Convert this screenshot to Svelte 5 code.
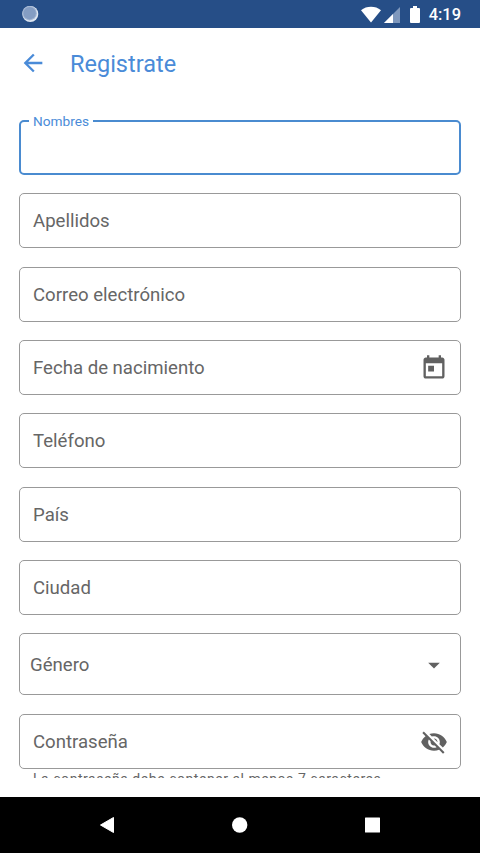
<script lang="ts">
    interface Field {
        label: string;
        icon?: "calendar" | "dropdown" | "eye-off";
        helper?: string;
    }

    const fields: Field[] = [
        { label: "Nombres" },
        { label: "Apellidos" },
        { label: "Correo electrónico" },
        { label: "Fecha de nacimiento", icon: "calendar" },
        { label: "Teléfono" },
        { label: "País" },
        { label: "Ciudad" },
        { label: "Género", icon: "dropdown" },
        {
            label: "Contraseña",
            icon: "eye-off",
            helper: "La contraseña debe contener al menos 7 caracteres",
        },
    ];

    let focused = "Nombres";
</script>

<div class="screen">
    <div class="status-bar">
        <svg class="sync" width="18" height="18" viewBox="0 0 18 18">
            <circle cx="9.300" cy="9" r="8" fill="#dfe7f2" />
            <circle cx="8.600" cy="8.200" r="7.300" fill="#a3b6d3" />
            <circle cx="8.600" cy="8.200" r="6.200" fill="#849dc3" />
        </svg>
        <svg class="wifi" width="22" height="17" viewBox="0 0 22 17">
            <path d="M11 16.5L1 4.2Q5.400 .8 11 .8T21 4.200z" fill="#fff" />
        </svg>
        <svg class="signal" width="16" height="16" viewBox="0 0 16 16">
            <path d="M0 16L16 0V16z" fill="#7f98bd" />
            <path d="M0 16L9 7V16z" fill="#fff" />
        </svg>
        <svg class="battery" width="10" height="17" viewBox="0 0 10 17">
            <path d="M3 0h4v2h2q1 0 1 1v13q0 1-1 1H1q-1 0-1-1V3q0-1 1-1h2z" fill="#fff" />
        </svg>
        <span class="time">4:19</span>
    </div>

    <div class="app-bar">
        <svg class="back" width="28" height="28" viewBox="0 0 24 24">
            <path d="M20 11H7.830l5.590-5.590L12 4l-8 8 8 8 1.410-1.410L7.830 13H20v-2z" fill="#4a8bd8" />
        </svg>
        <h1>Registrate</h1>
    </div>

    <div class="form">
        {#each fields as field}
            <div
                class="field"
                class:focused={field.label === focused}
                class:select={field.icon === "dropdown"}
            >
                <span class="label">{field.label}</span>
                {#if field.icon === "calendar"}
                    <svg width="28" height="28" viewBox="0 0 24 24">
                        <path d="M19 3h-1V1h-2v2H8V1H6v2H5c-1.110 0-1.990.9-1.990 2L3 19c0 1.100.890 2 2 2h14c1.100 0 2-.9 2-2V5c0-1.100-.9-2-2-2zm0 16H5V8h14v11zM7 10h5v5H7z" />
                    </svg>
                {:else if field.icon === "dropdown"}
                    <svg width="28" height="28" viewBox="0 0 24 24">
                        <path d="M7 10l5 5 5-5z" />
                    </svg>
                {:else if field.icon === "eye-off"}
                    <svg width="28" height="28" viewBox="0 0 24 24">
                        <path d="M12 7c2.760 0 5 2.240 5 5 0 .650-.130 1.260-.360 1.830l2.920 2.920c1.510-1.260 2.700-2.890 3.430-4.750-1.730-4.390-6-7.500-11-7.500-1.400 0-2.740.250-3.980.700l2.160 2.160C10.740 7.130 11.350 7 12 7zM2 4.270l2.280 2.280.460.460C3.080 8.300 1.780 10.020 1 12c1.730 4.390 6 7.500 11 7.500 1.550 0 3.030-.3 4.380-.840l.420.420L19.730 22 21 20.730 3.270 3 2 4.270zM7.530 9.800l1.550 1.550c-.050.210-.080.430-.080.650 0 1.660 1.340 3 3 3 .220 0 .440-.030.650-.080l1.550 1.550c-.670.330-1.410.530-2.200.530-2.760 0-5-2.240-5-5 0-.790.200-1.530.530-2.200zm4.310-.780l3.150 3.150.020-.160c0-1.660-1.340-3-3-3l-.170.010z" />
                    </svg>
                {/if}
            </div>
            {#if field.helper}
                <div class="helper">{field.helper}</div>
            {/if}
        {/each}
    </div>

    <div class="nav-bar">
        <svg width="16" height="18" viewBox="0 0 16 18">
            <path d="M13.500 1.500V16.500L.5 9z" fill="#fff" stroke="#fff" stroke-linejoin="round" />
        </svg>
        <svg width="16" height="16" viewBox="0 0 16 16">
            <circle cx="7.700" cy="8" r="7.700" fill="#fff" />
        </svg>
        <svg width="16" height="16" viewBox="0 0 16 16">
            <rect x="1" y=".5" width="15" height="15" rx=".5" fill="#fff" />
        </svg>
    </div>
</div>

<style>
    .screen {
        display: flex;
        flex-direction: column;
        width: 480px;
        height: 853px;
        overflow: hidden;
        background-color: #fff;
        font-family: Roboto, sans-serif;
    }

    svg {
        display: block;
        flex-shrink: 0;
    }

    .status-bar {
        display: flex;
        flex-shrink: 0;
        align-items: center;
        box-sizing: border-box;
        height: 28px;
        padding: 0 19px 0 21px;
        background-color: #264e87;
    }

    .wifi {
        margin-left: auto;
    }

    .signal {
        margin: 1px 10px 0 2px;
    }

    .battery {
        margin-right: 9px;
    }

    .time {
        padding-top: 2px;
        color: #fff;
        font-size: 16.4px;
        font-weight: 500;
        line-height: 26px;
    }

    .app-bar {
        display: flex;
        flex-shrink: 0;
        align-items: center;
        height: 70px;
        padding-left: 18.5px;
    }

    .back {
        margin-bottom: 1px;
    }

    h1 {
        margin: 2px 0 0 23.5px;
        color: #4a8bd8;
        font-size: 23.5px;
        font-weight: 400;
    }

    .form {
        height: 680px;
        box-sizing: border-box;
        flex-shrink: 0;
        padding: 22px 19px 0;
        overflow: hidden;
    }

    .field {
        display: flex;
        align-items: center;
        justify-content: space-between;
        box-sizing: border-box;
        height: 55px;
        margin-bottom: 18.35px;
        padding: 1px 12.5px 0 13px;
        border: 1.33px solid #999;
        border-radius: 5px;
        color: #666;
        font-size: 18.6px;
        fill: #616161;
    }

    .field.select {
        height: 62px;
        padding-left: 10px;
    }

    .field.focused {
        position: relative;
        border: 2px solid #4a8bd0;
    }

    .field.focused .label {
        position: absolute;
        top: -10px;
        left: 8px;
        padding: 0 4px;
        background-color: #fff;
        color: #4a8bd8;
        font-size: 13.7px;
        line-height: 18px;
    }

    .helper {
        margin: -18px 14px 0;
        color: #666;
        font-size: 14px;
        letter-spacing: 0.54px;
        line-height: 20px;
        white-space: nowrap;
    }

    .nav-bar {
        display: flex;
        flex-shrink: 0;
        align-items: center;
        justify-content: space-between;
        box-sizing: border-box;
        height: 56px;
        margin-top: auto;
        padding: 0 100px;
        background-color: #000;
    }
</style>
